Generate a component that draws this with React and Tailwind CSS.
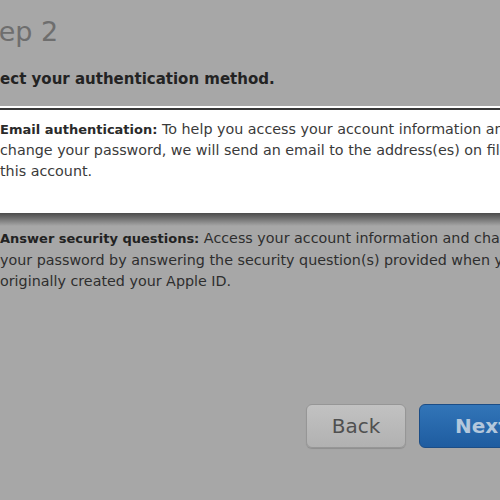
import React from 'react';

const font = { fontFamily: '"DejaVu Sans", Verdana, sans-serif' };

const Line = ({ children }) => (
  <div className="whitespace-nowrap">{children}</div>
);

export default function App() {
  return (
    <div className="w-[500px] h-[500px] overflow-hidden bg-[#a7a7a7] flex flex-col" style={font}>
      <div className="pt-[15px] ml-[-29px] text-[27px] leading-[34px] text-[#6e6e6e] whitespace-nowrap">Step 2</div>

      <div className="mt-[21px] ml-[-26px] text-[15px] leading-[18px] font-bold text-[#232323] whitespace-nowrap">
        Select your authentication method.
      </div>

      {/* selected option */}
      <div className="mt-[18px] w-[520px] border-t-2 border-white">
        <div className="border-t-2 border-[#383838] bg-white pt-[9px] pb-[31px] text-[14.3px] leading-[21px] text-[#3a3a3a]">
          <Line><span className="font-bold text-[13px] text-[#2a2a2a]">Email authentication:</span> To help you access your account information and</Line>
          <Line>change your password, we will send an email to the address(es) on file for</Line>
          <Line>this account.</Line>
        </div>
        <div className="h-[13px] bg-gradient-to-b from-[#4c4c4c] to-[#a7a7a7]" />
      </div>

      <div className="mt-[2px] text-[14.3px] leading-[21.5px] text-[#2e2e2e]">
        <Line><span className="font-bold text-[13px] text-[#222]">Answer security questions:</span> Access your account information and change</Line>
        <Line>your password by answering the security question(s) provided when you</Line>
        <Line>originally created your Apple ID.</Line>
      </div>

      <div className="flex-1" />

      <div className="flex gap-[13px] pl-[306px] pb-[52px] whitespace-nowrap">
        <button className="w-[100px] h-[44px] shrink-0 rounded-[6px] border border-[#969696] bg-gradient-to-b from-[#c2c2c2] to-[#b1b1b1] text-[20px] text-[#505050] shadow-[0_1px_1px_rgba(0,0,0,0.15)]">
          Back
        </button>
        <button className="w-[110px] h-[44px] shrink-0 rounded-[6px] border border-[#1c4d86] bg-gradient-to-b from-[#3275b8] to-[#1e5ca0] text-left pl-[35px] text-[20px] font-bold text-[#b3c7dc]">
          Next
        </button>
      </div>
    </div>
  );
}
